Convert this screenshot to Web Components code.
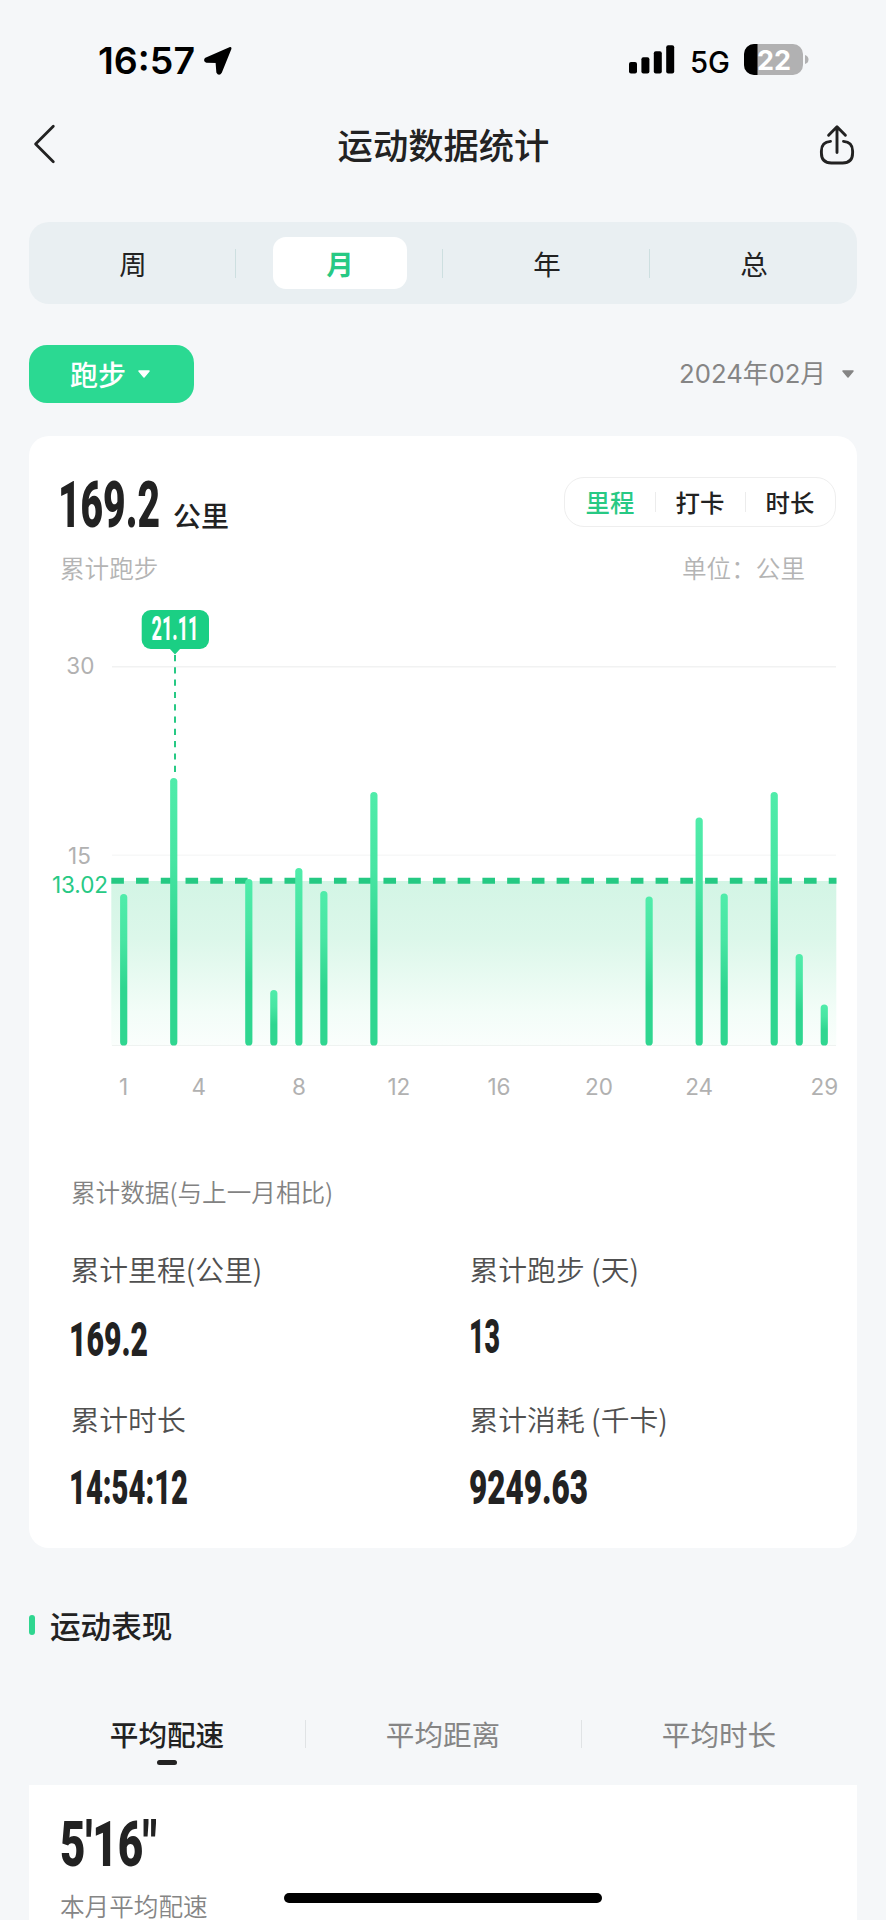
<!DOCTYPE html>
<html lang="zh-CN">
<head>
<meta charset="utf-8">
<title>运动数据统计</title>
<style>
  html, body { margin: 0; padding: 0; }
  body { width: 886px; height: 1920px; overflow: hidden; background: #f5f7f9; color: #222;
    font-family: "Noto Sans CJK SC", sans-serif; }
</style>
</head>
<body>
<stats-page></stats-page>

<script>
const GREEN = '#27c984';

// Number drawn to an exact width and cap height, for the narrow digits
class FitText extends HTMLElement {
    constructor() {
        super();
        this.attachShadow({ mode: 'open' });
    }

    connectedCallback() {
        const w = +this.getAttribute('w');
        const h = +this.getAttribute('h');
        const narrow = !this.hasAttribute('ui');
        const family = narrow ? 'Roboto, sans-serif' : 'Inter, sans-serif';
        const weight = this.getAttribute('weight') || 900;
        const size = h / (narrow ? 0.711 : 0.727);
        this.shadowRoot.innerHTML = `
      <style>
        :host{display:block;flex:none;width:${w}px;height:${h}px;}
        svg{display:block;overflow:visible;}
        text{font-family:${family};font-weight:${weight};font-size:${size}px;fill:currentColor;}
      </style>
      <svg width="${w}" height="${h}"><text x="0" y="${h}" textLength="${w}" lengthAdjust="spacingAndGlyphs"></text></svg>
    `;
        this.shadowRoot.querySelector('text').textContent = this.getAttribute('value');
    }
}

class StatusBar extends HTMLElement {
    constructor() {
        super();
        this.attachShadow({ mode: 'open' });
        this.shadowRoot.innerHTML = `
      <style>
        :host{display:flex;height:100px;padding:44px 77px 0 98px;box-sizing:border-box;color:#000;align-items:flex-start;}
        .time{margin-top:3px;}
        .arrow{margin:2px 0 0 8px;}
        .signal{margin:1px 0 0 auto;}
        .net{margin:6.5px 14px 0 15px;}
        .battery{display:grid;width:65px;height:31px;}
        .battery > *{grid-area:1/1;}
        .level{margin:6px 0 0 13px;color:#fff;}
        svg{display:block;}
      </style>
      <fit-text ui class="time" value="16:57" w="97" h="27" weight="560"></fit-text>
      <svg class="arrow" width="30" height="30" viewBox="0 0 30 30">
        <path d="M27 2.5 L3 13 Q2 14.5 3.5 15.2 L14 15.5 L14.8 26 Q16 28.5 17.5 26 Z" fill="#000" stroke="#000" stroke-width="3" stroke-linejoin="round"/>
      </svg>
      <svg class="signal" width="46" height="29" viewBox="0 0 46 29">
        <rect x="0" y="17" width="8" height="11.5" rx="2"/>
        <rect x="12.4" y="12.3" width="8" height="16.2" rx="2"/>
        <rect x="24.8" y="6.3" width="8" height="22.2" rx="2"/>
        <rect x="37.2" y="0.3" width="8" height="28.2" rx="2"/>
      </svg>
      <fit-text ui class="net" value="5G" w="40" h="21.5" weight="450"></fit-text>
      <div class="battery">
        <svg width="65" height="31" viewBox="0 0 65 31">
          <clipPath id="shell"><rect width="59" height="31" rx="10"/></clipPath>
          <g clip-path="url(#shell)"><rect width="59" height="31" fill="#b1b1b2"/><rect width="13.5" height="31"/></g>
          <path d="M61 11 Q64.5 12 64.5 15.5 Q64.5 19 61 20 Z" fill="#b1b1b2"/>
        </svg>
        <fit-text ui class="level" value="22" w="34" h="19.5" weight="650"></fit-text>
      </div>
    `;
    }
}

class NavBar extends HTMLElement {
    constructor() {
        super();
        this.attachShadow({ mode: 'open' });
        this.shadowRoot.innerHTML = `
      <style>
        :host{display:flex;justify-content:space-between;align-items:center;height:90px;padding:0 29px 0 30px;}
        .title{font-size:35.3px;font-weight:500;line-height:50px;margin-bottom:3px;}
        svg{display:block;width:40px;height:48px;fill:none;stroke:#222;stroke-linecap:round;stroke-linejoin:round;}
      </style>
      <svg viewBox="30 121 40 48" stroke-width="2.8"><path d="M53.3 126.3 L35.6 144 L53.3 161.7"/></svg>
      <div class="title"><slot></slot></div>
      <svg viewBox="817 121 40 48" stroke-width="2.9">
        <path d="M837 127 V152.5 M828.6 135.2 L837 126.8 L845.4 135.2"/>
        <path d="M830.5 141.4 Q821.4 142 821.4 151 V153 Q821.4 163 831.4 163 H842.6 Q852.6 163 852.6 153 V151 Q852.6 142 843.5 141.4"/>
      </svg>
    `;
    }
}

class PeriodTabs extends HTMLElement {
    constructor() {
        super();
        this.attachShadow({ mode: 'open' });
        this.shadowRoot.innerHTML = `
      <style>
        :host{display:grid;grid-template-columns:repeat(4,1fr);height:82px;border-radius:20px;background:#e9eff2;}
        .cell{display:flex;align-items:center;justify-content:center;position:relative;}
        .cell + .cell::before{content:"";position:absolute;left:-1px;top:27px;height:29px;width:1px;background:#cddfe0;}
        .pill{width:134px;height:52px;border-radius:13px;font-size:27.5px;line-height:52px;text-align:center;text-indent:1px;}
        .on{background:#fff;color:${GREEN};font-weight:700;}
      </style>
      ${['周', '月', '年', '总'].map(t => `<div class="cell"><div class="pill${t === '月' ? ' on' : ''}">${t}</div></div>`).join('')}
    `;
    }
}

class FilterRow extends HTMLElement {
    constructor() {
        super();
        this.attachShadow({ mode: 'open' });
        this.shadowRoot.innerHTML = `
      <style>
        :host{display:flex;justify-content:space-between;align-items:center;height:58px;}
        .sport{display:flex;align-items:center;box-sizing:border-box;width:165px;height:58px;padding-left:41px;
          border-radius:18px;background:#2bd992;color:#fff;font-size:28px;font-weight:500;line-height:56px;}
        .month{display:flex;align-items:center;color:#858585;font-family:Inter,"Noto Sans CJK SC",sans-serif;
          font-size:25.7px;line-height:56px;padding-right:3px;}
        svg{display:block;fill:currentColor;stroke:currentColor;stroke-width:1.5;stroke-linejoin:round;}
        .sport svg{margin-left:12px;}
        .month svg{margin-left:16px;}
      </style>
      <div class="sport"><span>跑步</span><svg width="12" height="8"><path d="M1 1 H11 L6 7 Z"/></svg></div>
      <div class="month"><span>2024年02月</span><svg width="12" height="8"><path d="M1 1 H11 L6 7 Z"/></svg></div>
    `;
    }
}

class MetricSwitch extends HTMLElement {
    constructor() {
        super();
        this.attachShadow({ mode: 'open' });
        this.shadowRoot.innerHTML = `
      <style>
        :host{display:grid;grid-template-columns:repeat(3,1fr);align-items:center;box-sizing:border-box;width:272px;height:50px;
          border:1.5px solid #eee;border-radius:20px;font-size:24.4px;font-weight:500;line-height:46px;text-align:center;}
        span + span{background:linear-gradient(#ececec,#ececec) no-repeat 0 50%/1px 20px;}
        .on{color:${GREEN};}
      </style>
      <span class="on">里程</span><span>打卡</span><span>时长</span>
    `;
    }
}

class DistanceChart extends HTMLElement {
    constructor() {
        super();
        this.attachShadow({ mode: 'open' });
    }

    connectedCallback() {
        // day -> y of the bar top
        const tops = { 1: 894, 3: 778, 6: 879, 7: 990, 8: 868, 9: 891, 11: 792, 22: 896.5, 24: 817.5, 25: 893.5, 27: 792, 28: 954, 29: 1004.5 };
        const x = day => 123.7 + (day - 1) * 25.02;
        const bars = Object.entries(tops).map(([d, y]) =>
            `<rect x="${x(d) - 3.6}" y="${y}" width="7.2" height="${1045.5 - y}" rx="3.6" fill="url(#bar)"/>`).join('');
        const days = [1, 4, 8, 12, 16, 20, 24, 29].map(d =>
            `<text x="${x(d)}" y="1095.3" text-anchor="middle">${d}</text>`).join('');

        this.shadowRoot.innerHTML = `
      <style>
        :host{display:block;height:510px;}
        svg{display:block;}
        text{font-family:Inter,sans-serif;font-size:22.5px;fill:#b1b1b1;}
        .avg{fill:${GREEN};}
        .tip{font-family:Roboto,sans-serif;font-weight:800;font-size:32.5px;fill:#fff;}
      </style>
      <svg width="828" height="510" viewBox="29 600 828 510">
        <defs>
          <linearGradient id="bar" x1="0" y1="0" x2="0" y2="1">
            <stop offset="0" stop-color="#50ecaa"/><stop offset=".3" stop-color="#48e5a3"/>
            <stop offset=".62" stop-color="#2fd690"/><stop offset="1" stop-color="#2fd690"/>
          </linearGradient>
          <linearGradient id="area" x1="0" y1="0" x2="0" y2="1">
            <stop offset="0" stop-color="#d3f5e5"/><stop offset=".35" stop-color="#dcf7ea"/>
            <stop offset=".8" stop-color="#f3fdf8"/><stop offset="1" stop-color="#fafefc"/>
          </linearGradient>
        </defs>
        <path d="M112 666.7 H836" stroke="#f1f2f2" stroke-width="1.5"/>
        <path d="M112 855.3 H836" stroke="#f7f8f8" stroke-width="1.5"/>
        <rect x="111.3" y="881" width="725" height="164.5" fill="url(#area)"/>
        <path d="M112 1045.5 H836" stroke="#eff3f1" stroke-width="1.2"/>
        <path d="M111.3 880.7 H836.5" stroke="#25c983" stroke-width="6" stroke-dasharray="12.6 12.14"/>
        ${bars}
        <path d="M175 655 V774" stroke="${GREEN}" stroke-width="2" stroke-dasharray="6.2 6.1"/>
        <rect x="141.7" y="610" width="67.3" height="39" rx="9" fill="#1bcf84"/>
        <path d="M169.5 648.5 H180.5 L175 654.5 Z" fill="#1bcf84"/>
        <text class="tip" x="151.5" y="640" textLength="47" lengthAdjust="spacingAndGlyphs">21.11</text>
        <text x="80.3" y="674" text-anchor="middle">30</text>
        <text x="79.5" y="864" text-anchor="middle">15</text>
        <text class="avg" x="52" y="893" textLength="56">13.02</text>
        ${days}
      </svg>
    `;
    }
}

class TotalItem extends HTMLElement {
    constructor() {
        super();
        this.attachShadow({ mode: 'open' });
        this.shadowRoot.innerHTML = `
      <style>
        :host{display:flex;flex-direction:column;}
        .label{font-size:28.8px;font-weight:350;line-height:40px;color:#505050;white-space:pre;margin-left:-.5px;}
        ::slotted(fit-text){margin:var(--gap,32px) 0 0 var(--shift,-2px);}
      </style>
      <div class="label"></div><slot></slot>
    `;
    }

    connectedCallback() {
        this.shadowRoot.querySelector('.label').textContent = this.getAttribute('label');
    }
}

class SummaryCard extends HTMLElement {
    constructor() {
        super();
        this.attachShadow({ mode: 'open' });
        this.shadowRoot.innerHTML = `
      <style>
        :host{display:block;box-sizing:border-box;height:1112px;border-radius:20px;background:#fff;}
        .head{display:flex;justify-content:space-between;height:73px;padding:41px 21px 0 29px;}
        .total{display:flex;align-items:flex-start;}
        .total fit-text{margin-top:4px;}
        .unit{font-size:28px;font-weight:500;line-height:40px;margin:18px 0 0 13px;}
        .sub{display:flex;justify-content:space-between;padding:0 52px 0 31px;
          color:#b4b4b4;font-size:24.6px;font-weight:350;line-height:34px;height:50px;}
        .caption{margin:64px 0 0 42px;color:#828282;font-size:24.6px;font-weight:350;line-height:34px;}
        .grid{display:grid;grid-template-columns:399px 1fr;grid-template-rows:150px auto;padding:41px 0 0 42px;}
      </style>
      <div class="head">
        <div class="total"><fit-text value="169.2" w="102" h="45.5"></fit-text><span class="unit">公里</span></div>
        <metric-switch></metric-switch>
      </div>
      <div class="sub"><span>累计跑步</span><span>单位：公里</span></div>
      <distance-chart></distance-chart>
      <div class="caption">累计数据(与上一月相比)</div>
      <div class="grid">
        <total-item label="累计里程(公里)"><fit-text value="169.2" w="79" h="34.5"></fit-text></total-item>
        <total-item label="累计跑步 (天)" style="--gap:29px;--shift:-1px"><fit-text value="13" w="31" h="34.5"></fit-text></total-item>
        <total-item label="累计时长" style="--gap:30px"><fit-text value="14:54:12" w="119" h="34.5"></fit-text></total-item>
        <total-item label="累计消耗 (千卡)" style="--gap:30px;--shift:-1px"><fit-text value="9249.63" w="119" h="34.5"></fit-text></total-item>
      </div>
    `;
    }
}

class PerformanceSection extends HTMLElement {
    constructor() {
        super();
        this.attachShadow({ mode: 'open' });
        this.shadowRoot.innerHTML = `
      <style>
        :host{display:block;}
        h2{display:flex;align-items:center;gap:15px;margin:0;height:44px;font-size:30.6px;font-weight:500;line-height:44px;}
        h2::before{content:"";width:6px;height:20px;border-radius:3px;background:#2fd690;}
        .tabs{display:grid;grid-template-columns:repeat(3,1fr);margin-top:66px;height:72px;
          font-size:28.6px;line-height:42px;text-align:center;color:#858585;}
        .tabs div + div{background:linear-gradient(#e0e3e5,#e0e3e5) no-repeat 0 7px/1px 28px;}
        .on{color:#222;font-weight:500;}
        .on::after{content:"";display:block;width:20px;height:4.5px;border-radius:2.5px;background:#222;margin:5px auto 0;}
        .card{height:135px;background:#fff;padding:36px 0 0 31px;box-sizing:border-box;}
        .note{color:#858585;font-size:24.6px;font-weight:350;line-height:30px;margin-top:24px;}
      </style>
      <h2>运动表现</h2>
      <div class="tabs"><div class="on">平均配速</div><div>平均距离</div><div>平均时长</div></div>
      <div class="card">
        <fit-text value="5'16&quot;" w="97" h="45"></fit-text>
        <div class="note">本月平均配速</div>
      </div>
    `;
    }
}

class StatsPage extends HTMLElement {
    constructor() {
        super();
        this.attachShadow({ mode: 'open' });
        this.shadowRoot.innerHTML = `
      <style>
        :host{display:block;position:relative;width:886px;height:1920px;overflow:hidden;}
        main{padding:32px 29px 0;}
        filter-row{margin:41px 0 33px;}
        performance-section{margin-top:55px;}
        .home{position:absolute;left:284px;bottom:17px;width:318px;height:10px;border-radius:5px;background:#000;}
      </style>
      <status-bar></status-bar>
      <nav-bar>运动数据统计</nav-bar>
      <main>
        <period-tabs></period-tabs>
        <filter-row></filter-row>
        <summary-card></summary-card>
        <performance-section></performance-section>
      </main>
      <div class="home"></div>
    `;
    }
}

customElements.define('fit-text', FitText);
customElements.define('status-bar', StatusBar);
customElements.define('nav-bar', NavBar);
customElements.define('period-tabs', PeriodTabs);
customElements.define('filter-row', FilterRow);
customElements.define('metric-switch', MetricSwitch);
customElements.define('distance-chart', DistanceChart);
customElements.define('total-item', TotalItem);
customElements.define('summary-card', SummaryCard);
customElements.define('performance-section', PerformanceSection);
customElements.define('stats-page', StatsPage);
</script>
</body>
</html>
